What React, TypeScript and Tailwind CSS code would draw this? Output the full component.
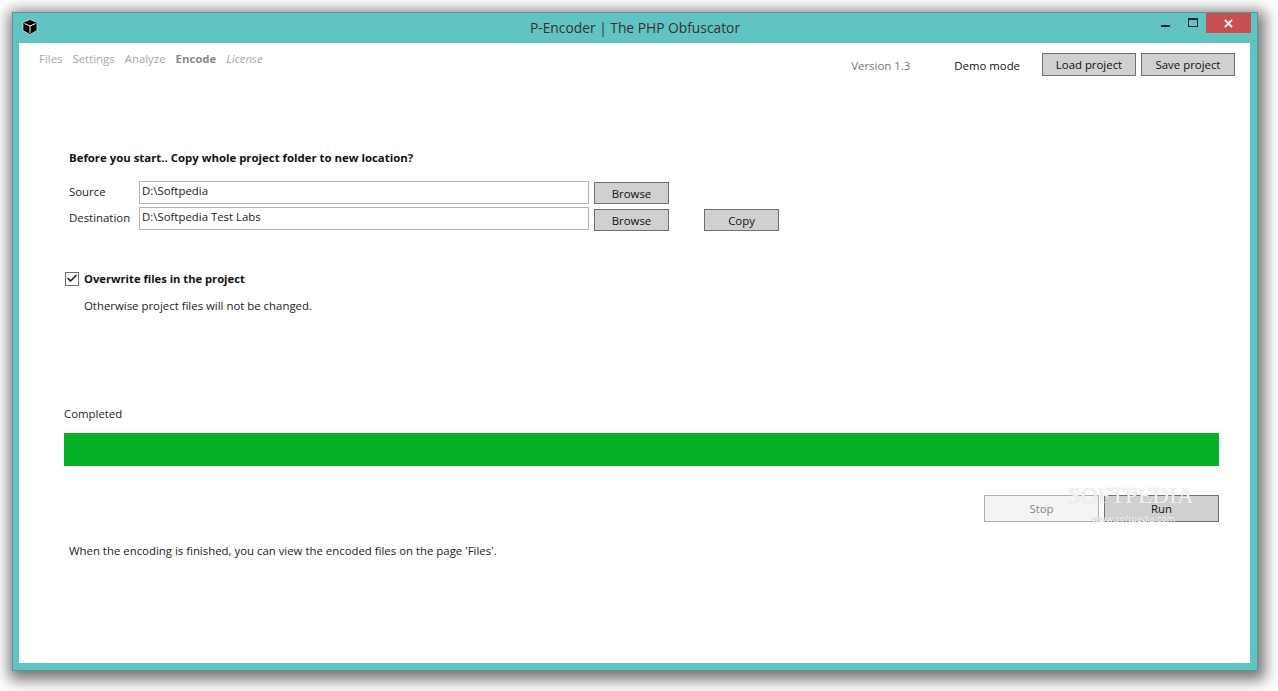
import { Check } from 'lucide-react';

const fontUi = "font-['Open_Sans','Noto_Sans',sans-serif]";

const Btn = ({ label, className = '' }: { label: string; className?: string }) => (
  <button
    className={`flex items-center justify-center border border-[#707070] bg-[#d0d0d0] pt-[1px] text-[11.4px] leading-[12px] text-[#111] ${className}`}
  >
    {label}
  </button>
);

const PathInput = ({ value }: { value: string }) => (
  <div className="h-[23px] w-[450px] border border-[#b4b4b4] pl-[2px] text-[11.4px] leading-[17px] text-[#222]">
    {value}
  </div>
);

const App = () => {
  return (
    <div className={`${fontUi} h-[691px] w-[1278px] overflow-hidden bg-white pl-[12px] pt-[12px]`}>
      <div className="relative flex h-[659px] w-[1246px] flex-col border border-[#4c9c9a] bg-[#62c3c3] shadow-[2px_4px_14px_5px_rgba(0,0,0,0.55)]">
        {/* title bar */}
        <div className="flex h-[30px] shrink-0 items-start">
          <div className="w-[9px]" />
          <svg viewBox="0 0 16 16" className="mt-[6px] h-[16px] w-[16px]">
            <path d="M8 .5 15 3.5V11.5L8 15.5 1 11.5V3.5Z" fill="#000" stroke="#fff" strokeWidth="0.6" />
            <path d="M2.5 4.5 8 7 13.5 4.5M8 7V14" fill="none" stroke="#fff" strokeWidth="1" />
          </svg>
          <div className="flex-1 pl-[71px] pt-[5px] text-center text-[13.8px] leading-[20px] text-[#333]">
            P-Encoder | The PHP Obfuscator
          </div>
          <div className="flex h-[20px] items-center">
            <div className="mr-[18px] mt-[6px] h-[2px] w-[9px] bg-[#222]" />
            <div className="mr-[8px] mb-[2px] h-[9px] w-[10px] border border-t-2 border-[#222]" />
            <div className="mr-[6px] flex h-[20px] w-[45px] items-center justify-center bg-[#c75050]">
              <svg viewBox="0 0 10 10" className="h-[9px] w-[9px]">
                <path d="M1 1 9 9M9 1 1 9" stroke="#fff" strokeWidth="2" />
              </svg>
            </div>
          </div>
        </div>

        {/* content */}
        <div className="relative mb-[7px] ml-[6px] mr-[7px] flex-1 bg-white">
          <div className="flex h-[33px] items-start pl-[20px] pr-[16px] pt-[8px]">
            <nav className="flex gap-[10px] text-[11.4px] leading-[16px] text-[#a8a8a8]">
              <span>Files</span>
              <span>Settings</span>
              <span>Analyze</span>
              <span className="font-bold text-[#8a8a8a]">Encode</span>
              <span className="italic">License</span>
            </nav>
          </div>

          <div className="absolute right-[15px] top-[10px] flex items-center">
            <span className="mr-[44px] pt-[2px] text-[11.4px] leading-[17px] text-[#777]">Version 1.3</span>
            <span className="mr-[22px] pt-[2px] text-[11.4px] leading-[17px] text-[#111]">Demo mode</span>
            <Btn label="Load project" className="mr-[5px] h-[23px] w-[94px]" />
            <Btn label="Save project" className="h-[23px] w-[94px]" />
          </div>

          <div className="pl-[50px] pt-[73px] text-[11.4px] font-bold leading-[17px] text-[#111]">
            Before you start.. Copy whole project folder to new location?
          </div>

          <div className="mt-[15px] flex pl-[50px]">
            <div className="flex w-[70px] flex-col text-[11.4px] leading-[17px] text-[#222]">
              <span className="h-[26px] pt-[2px]">Source</span>
              <span className="pt-[2px]">Destination</span>
            </div>
            <div className="flex flex-col gap-[3px]">
              <PathInput value="D:\Softpedia" />
              <PathInput value="D:\Softpedia Test Labs" />
            </div>
            <div className="ml-[5px] flex flex-col gap-[5px] pt-[1px]">
              <Btn label="Browse" className="h-[22px] w-[75px]" />
              <Btn label="Browse" className="h-[22px] w-[75px]" />
            </div>
            <div className="ml-[35px] pt-[28px]">
              <Btn label="Copy" className="h-[22px] w-[75px]" />
            </div>
          </div>

          <div className="mt-[39px] flex items-center pl-[46px]">
            <div className="flex h-[14px] w-[14px] items-center justify-center border border-[#707070]">
              <Check size={13} strokeWidth={3.5} className="text-[#222]" />
            </div>
            <span className="ml-[5px] text-[11.2px] font-bold leading-[17px] text-[#111]">Overwrite files in the project</span>
          </div>
          <div className="mt-[10px] pl-[65px] text-[11.4px] leading-[17px] text-[#222]">
            Otherwise project files will not be changed.
          </div>

          <div className="mt-[91px] pl-[45px] text-[11.4px] leading-[17px] text-[#222]">Completed</div>
          <div className="ml-[45px] mt-[11px] h-[33px] w-[1155px] bg-[#06b025]" />

          <div className="mt-[29px] flex justify-end gap-[5px] pr-[31px]">
            <button className="flex h-[27px] w-[115px] items-center justify-center border border-[#adadad] bg-[#f4f4f4] pt-[1px] text-[11.4px] leading-[12px] text-[#888]">
              Stop
            </button>
            <Btn label="Run" className="h-[27px] w-[115px]" />
          </div>

          <div className="mt-[20px] pl-[50px] text-[11.4px] leading-[17px] text-[#222]">
            When the encoding is finished, you can view the encoded files on the page 'Files'.
          </div>

          {/* watermark */}
          <div className="pointer-events-none absolute left-[1049px] top-[446px] font-['Liberation_Serif',serif] text-[23px] leading-[14px] tracking-[0.2px] text-white/80 [text-shadow:0_0_1px_#bbb]">
            SOFTPEDIA
          </div>
          <div className="pointer-events-none absolute left-[1073px] top-[471px] text-[9px] leading-[10px] text-white [text-shadow:0_0_1px_#999]">
            www.softpedia.com
          </div>
        </div>
      </div>
    </div>
  );
};

export default App;
